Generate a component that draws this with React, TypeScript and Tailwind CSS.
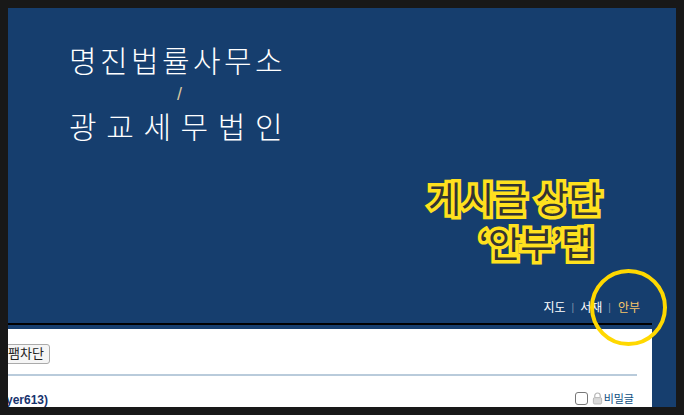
const KR = "font-['Liberation_Sans','Noto_Sans_CJK_KR',sans-serif]";

function NavLinks() {
  return (
    <div className="mr-[36px] mt-[2px] flex h-[14px] items-center justify-end text-[12px] leading-[14px] text-white">
      <span>지도</span>
      <span className="mx-[6px] text-[10px] text-[#7f93ad]">|</span>
      <span>서재</span>
      <span className="ml-[6px] mr-[7px] text-[10px] text-[#7f93ad]">|</span>
      <span className="text-[#f5c469]">안부</span>
    </div>
  );
}

export default function App() {
  return (
    <div className={`${KR} relative h-[415px] w-[684px] overflow-hidden bg-[#181818] p-[8px]`}>
      <div className="relative flex h-[399px] flex-col overflow-hidden bg-[#163e6e]">
        <header className="ml-[61px] mt-[32px] h-[259px] whitespace-nowrap text-white">
          <h1 className="font-['Noto_Sans_CJK_KR'] text-[30px] font-light leading-[38px] tracking-[3.4px]">
            명진법률사무소
          </h1>
          <div className="ml-[108px] mt-[5px] text-[18px] leading-[22px] text-[#d8c8a0]">/</div>
          <h2 className="mt-[1px] font-['Noto_Sans_CJK_KR'] text-[30px] font-light leading-[38px] tracking-[9.6px]">
            광교세무법인
          </h2>
        </header>

        <NavLinks />

        <div className="mr-[24px] mt-[8px] h-[2px] bg-black" />

        <main className="mr-[24px] mt-[4px] flex-1 overflow-hidden bg-white">
          <div className="flex h-[45px] items-start pt-[15px]">
            <button className="-ml-[18px] h-[20px] rounded-[3px] border border-[#aaaaaa] bg-[#f5f5f5] px-[5px] text-[13px] leading-[18px] text-[#222222]">
              스팸차단
            </button>
          </div>
          <div className="mr-[15px] h-[2px] bg-[#b9cbdb]" />
          <div className="mr-[18px] mt-[14px] flex items-center justify-between">
            <span className="-ml-[2px] pt-[3px] text-[12px] font-bold leading-[14px] text-[#17336e]">yer613)</span>
            <span className="flex items-center">
              <span className="h-[13px] w-[13px] rounded-[3px] border border-[#777777] bg-white" />
              <svg viewBox="0 0 12 14" className="ml-[4px] h-[13px] w-[11px]">
                <path d="M3 6V4a3 3 0 0 1 6 0v2" fill="none" stroke="#b5b5b5" strokeWidth="1.3" />
                <rect x="1.5" y="6" width="9" height="7" rx="1.5" fill="#d9d9d9" stroke="#b5b5b5" />
              </svg>
              <span className="ml-[1px] text-[11px] leading-[14px] text-[#0f4f82]">비밀글</span>
            </span>
          </div>
        </main>

        <div className="absolute left-[420px] top-[167px] whitespace-nowrap font-['Noto_Sans_CJK_KR'] text-[36px] font-normal leading-[45px] text-[#333333] [-webkit-text-stroke:7px_#ffe11e] [paint-order:stroke_fill] [stroke-linejoin:round]">
          <div>게시글 상단</div>
          <div className="ml-[51px] tracking-[-1px]">‘안부’탭</div>
        </div>
        <div className="absolute left-[582px] top-[261px] h-[77px] w-[77px] rounded-full border-[4px] border-[#ffd800]" />
      </div>
    </div>
  );
}
